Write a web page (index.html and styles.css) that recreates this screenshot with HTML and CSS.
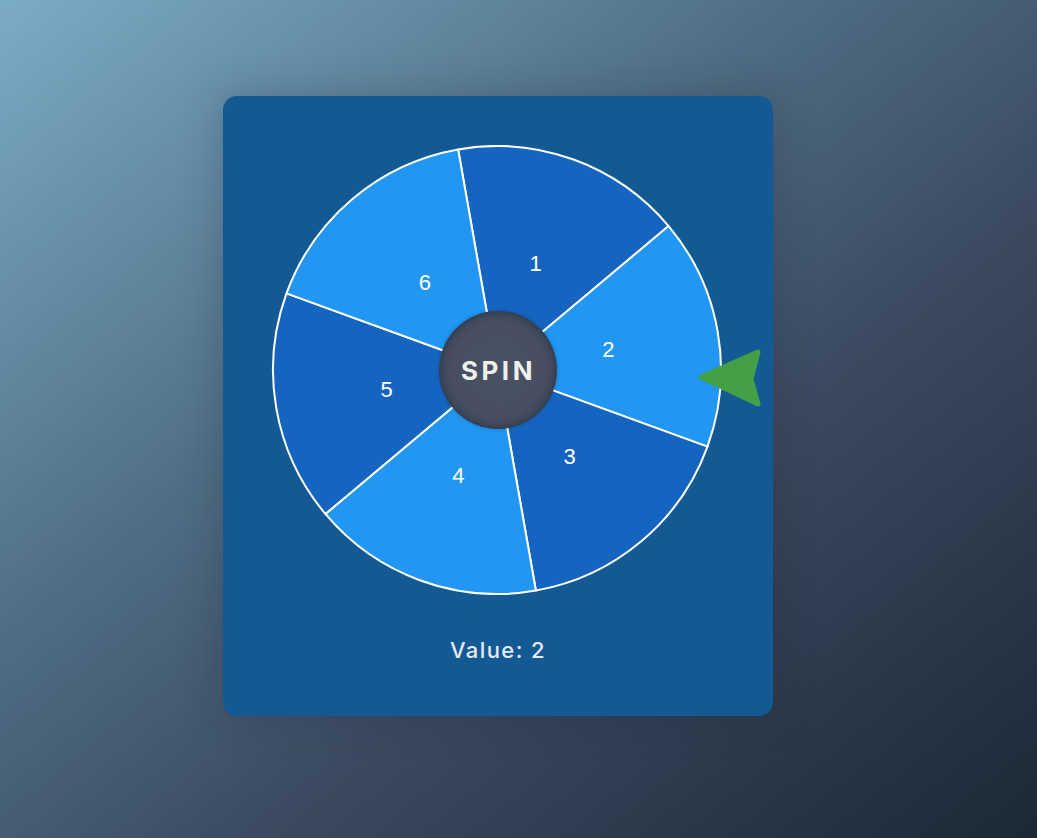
FILE: index.html
```html
<!DOCTYPE html>
<html lang="en">
<head>
<meta charset="utf-8">
<title>Spin Wheel</title>
<link rel="stylesheet" href="styles.css">
</head>
<body>
<main class="page">
  <section class="card">
    <div class="wheel-wrap">
      <svg class="wheel" width="452" height="450" viewBox="-1 0 452 450">
        <g stroke="#ffffff" stroke-width="2" stroke-linejoin="round">
          <path d="M225 225 L186.10 4.40 A224 224 0 0 1 396.59 81.02 Z" fill="#1565c0"/>
          <path d="M225 225 L396.59 81.02 A224 224 0 0 1 435.49 301.61 Z" fill="#2196f3"/>
          <path d="M225 225 L435.49 301.61 A224 224 0 0 1 263.90 445.60 Z" fill="#1565c0"/>
          <path d="M225 225 L263.90 445.60 A224 224 0 0 1 53.41 368.98 Z" fill="#2196f3"/>
          <path d="M225 225 L53.41 368.98 A224 224 0 0 1 14.51 148.39 Z" fill="#1565c0"/>
          <path d="M225 225 L14.51 148.39 A224 224 0 0 1 186.10 4.40 Z" fill="#2196f3"/>
        </g>
        <g class="labels" fill="#ffffff" text-anchor="middle" dominant-baseline="central">
          <text x="263.6" y="118.5">1</text>
          <text x="336.3" y="204.9">2</text>
          <text x="297.6" y="311.1">3</text>
          <text x="186.3" y="330.7">4</text>
          <text x="114.7" y="244.1">5</text>
          <text x="152.9" y="137.9">6</text>
        </g>
      </svg>
      <button class="spin" type="button">SPIN</button>
      <svg class="pointer" width="64" height="60" viewBox="0 0 64 60">
        <path d="M3 29 L60 4 L53 31 L60 56 Z" fill="#43a047" stroke="#43a047" stroke-width="5" stroke-linejoin="round"/>
      </svg>
    </div>
    <p class="value">Value: 2</p>
  </section>
</main>
</body>
</html>
```
FILE: styles.css
```css
html, body {
  margin: 0;
  padding: 0;
}

body {
  min-height: 838px;
  background: linear-gradient(to bottom right, #7bacc6 0%, #4f6e84 38%, #3b4a60 62%, #1a2935 100%);
  font-family: Inter, "Liberation Sans", sans-serif;
}

.page {
  padding: 96px 0 0 223px;
}

.card {
  box-sizing: border-box;
  width: 550px;
  height: 620px;
  padding: 49px 0 0;
  background: #135993;
  border-radius: 14px;
  box-shadow: 0 0 40px rgba(30, 30, 60, 0.25);
  display: flex;
  flex-direction: column;
  align-items: flex-start;
}

.wheel-wrap {
  position: relative;
  width: 452px;
  height: 450px;
  margin-left: 48px;
  display: grid;
  place-items: center;
}

.wheel {
  grid-area: 1 / 1;
  display: block;
}

.labels {
  font-family: "Liberation Sans", Arial, sans-serif;
  font-size: 22px;
}

.spin {
  grid-area: 1 / 1;
  width: 118px;
  height: 118px;
  margin-left: 2px;
  border: 0;
  border-radius: 50%;
  background: radial-gradient(circle, #495263 0%, #464e5f 60%, #3a4556 100%);
  box-shadow: inset 0 0 10px rgba(20, 30, 45, 0.55), 0 0 4px rgba(0, 0, 0, 0.2);
  color: #eef0ee;
  font-family: Inter, "Liberation Sans", sans-serif;
  font-weight: 700;
  font-size: 26px;
  letter-spacing: 3.5px;
  padding: 0 0 0 1px;
  cursor: pointer;
}

.pointer {
  position: absolute;
  left: 427px;
  top: 203px;
}

.value {
  align-self: center;
  margin: 40px 0 0;
  color: #e4ebf2;
  font-family: Inter, "Liberation Sans", sans-serif;
  font-weight: 500;
  font-size: 22px;
  letter-spacing: 1.4px;
  line-height: 30px;
}
```
